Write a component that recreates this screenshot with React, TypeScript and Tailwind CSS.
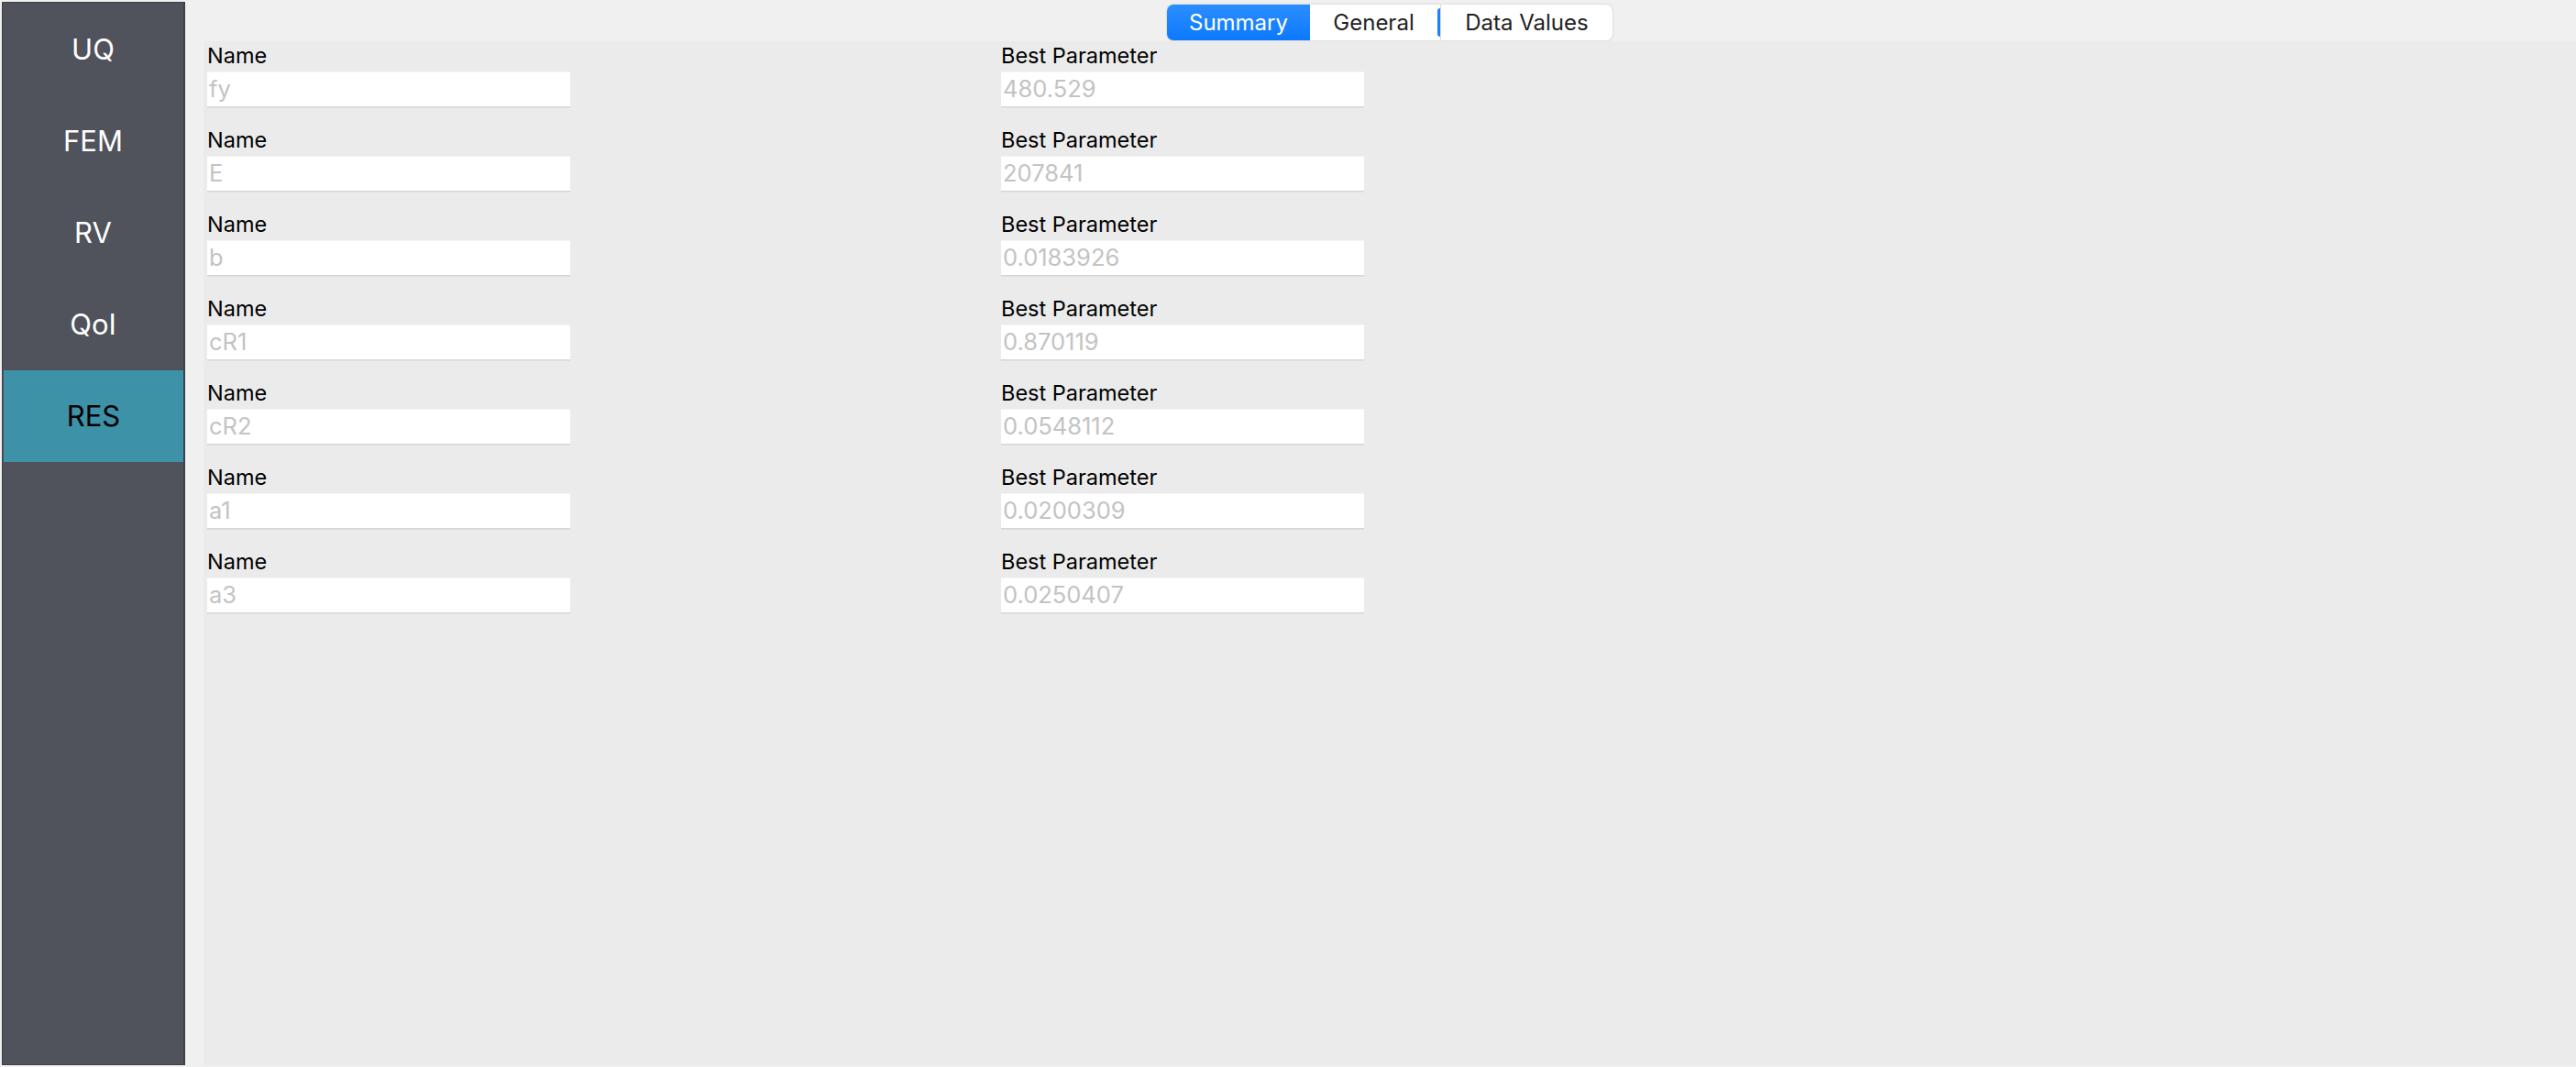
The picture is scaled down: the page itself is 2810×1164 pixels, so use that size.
const navItems = ['UQ', 'FEM', 'RV', 'QoI', 'RES'];

const rows = [
    { name: 'fy', value: '480.529' },
    { name: 'E', value: '207841' },
    { name: 'b', value: '0.0183926' },
    { name: 'cR1', value: '0.870119' },
    { name: 'cR2', value: '0.0548112' },
    { name: 'a1', value: '0.0200309' },
    { name: 'a3', value: '0.0250407' },
];

function Field({ label, value }: { label: string; value: string }) {
    return (
        <div className="flex flex-col">
            <span className="h-[24px] text-[23.5px] leading-[24px] text-black">{label}</span>
            <div className="mt-[5px] flex h-[38px] w-[396px] items-center border-t border-[#f4f4f4] bg-white pl-[2px] text-[25.5px] text-[#c3c3c3] shadow-[0_1.5px_0_#d6d6d6]">
                {value}
            </div>
        </div>
    );
}

export default function App() {
    return (
        <div
            className="flex h-[1164px] w-[2810px] bg-[#f0f0f0]"
            style={{ fontFamily: 'Inter, "Liberation Sans", Arial, sans-serif' }}
        >
            {/* Sidebar */}
            <div className="my-[2px] ml-[2px] flex w-[200px] flex-col border border-r-2 border-[#3d4046] bg-[#50535b] pt-px">
                {navItems.map((item) => (
                    <div
                        key={item}
                        className={`flex h-[100px] items-center justify-center text-[31px] ${
                            item === 'RES' ? 'ml-px bg-[#3e92a8] text-black' : 'text-white'
                        }`}
                    >
                        {item}
                    </div>
                ))}
            </div>

            {/* Main */}
            <div className="flex flex-1 flex-col">
                <div className="ml-[20px] flex h-[45px] justify-center pt-[5px]">
                    <div className="flex h-[39px] rounded-[7px] bg-white text-[24px] text-[#222] shadow-[0_0_2px_rgba(0,0,0,0.25)]">
                        <div className="flex w-[156px] items-center justify-center rounded-l-[7px] bg-gradient-to-b from-[#2b8dff] to-[#0a79fe] text-white">
                            Summary
                        </div>
                        <div className="flex w-[139px] items-center justify-center">General</div>
                        <div className="my-[4px] w-[3px] rounded-l-[3px] bg-[#1a82ff]" />
                        <div className="flex w-[188px] items-center justify-center border-l border-[#dcdcdc]">
                            Data Values
                        </div>
                    </div>
                </div>

                <div className="mb-[2px] ml-[20px] flex-1 bg-[#ebebeb] pl-[4px] pt-[4px]">
                    <div className="flex flex-col gap-[25px]">
                        {rows.map((row) => (
                            <div key={row.name} className="grid grid-cols-[866px_866px]">
                                <Field label="Name" value={row.name} />
                                <Field label="Best Parameter" value={row.value} />
                            </div>
                        ))}
                    </div>
                </div>
            </div>
        </div>
    );
}
